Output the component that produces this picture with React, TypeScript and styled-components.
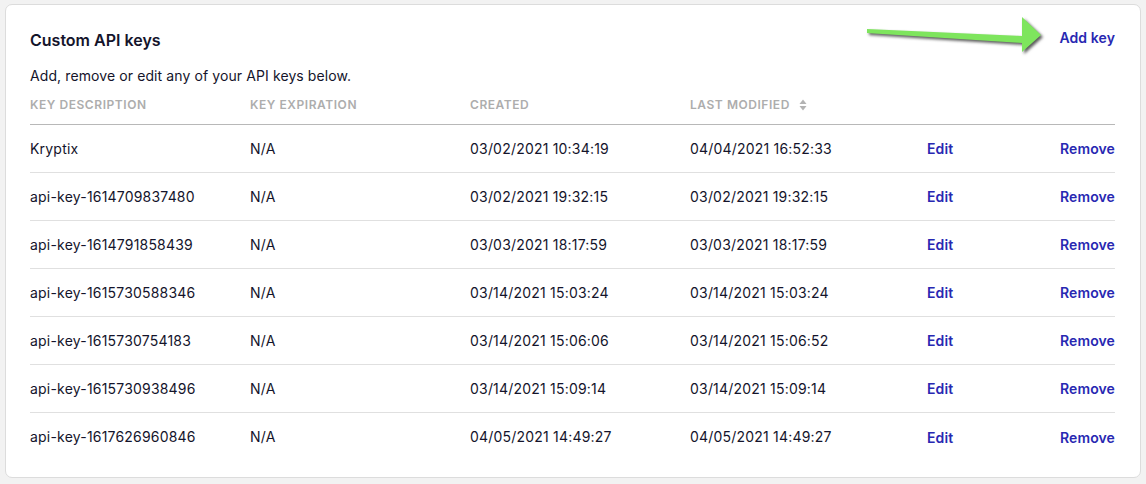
import React from "react";
import styled, { createGlobalStyle } from "styled-components";

const Global = createGlobalStyle`
  html, body { margin: 0; padding: 0; background: #f2f2f2; }
  body { font-family: Inter, "Noto Sans", Arial, sans-serif; color: #1c1c33; }
  * { box-sizing: border-box; }
`;

const Page = styled.div`
  padding: 4px 5px 7px 5px;
`;

const Card = styled.div`
  position: relative;
  background: #fff;
  border: 1px solid #dcdcdc;
  border-radius: 7px;
  padding: 23px 25px 16px 24px;
`;

const Head = styled.div`
  display: flex;
  justify-content: space-between;
  align-items: flex-start;
`;

const Title = styled.h2`
  margin: 0;
  font-size: 16px;
  line-height: 24px;
  font-weight: 600;
  color: #14142b;
`;

const Link = styled.a`
  font-size: 14px;
  font-weight: 600;
  line-height: 20px;
  letter-spacing: 0.1px;
  color: #2828b2;
  text-decoration: none;
  cursor: pointer;
`;

const AddLink = styled(Link)`
  margin-top: 0;
`;

const Sub = styled.p`
  margin: 14px 0 0;
  font-size: 14px;
  line-height: 20px;
  letter-spacing: 0.1px;
  color: #14142b;
`;

const Row = styled.div<{ $header?: boolean; $last?: boolean }>`
  display: grid;
  grid-template-columns: 220px 220px 220px 220px 110px 1fr;
  align-items: center;
  height: ${(p) => (p.$header ? "auto" : "48px")};
  padding: ${(p) => (p.$header ? "11px 0 11px" : "0")};
  border-bottom: ${(p) =>
    p.$last ? "none" : p.$header ? "1px solid #b8b8b8" : "1px solid #e0e0e0"};
`;

const Th = styled.div`
  font-size: 12px;
  line-height: 16px;
  font-weight: 600;
  letter-spacing: 0.55px;
  color: #adadad;
  text-transform: uppercase;
  display: flex;
  align-items: center;
  gap: 9px;
`;

const Td = styled.div`
  font-size: 14px;
  line-height: 20px;
  letter-spacing: 0.2px;
  color: #14142b;
`;

const EditCell = styled.div`
  padding-left: 17px;
`;

const RemoveCell = styled.div`
  text-align: right;
`;

const ArrowSvg = styled.svg`
  position: absolute;
  left: 854px;
  top: 7px;
  overflow: visible;
  filter: drop-shadow(2px 2px 1.5px rgba(0, 0, 0, 0.65));
`;

const SortIcon = () => (
  <svg width="8" height="12" viewBox="0 0 8 12">
    <path d="M4 0.5 L7.5 5 H0.5 Z" fill="#b3b3b3" />
    <path d="M4 11.5 L7.5 7 H0.5 Z" fill="#b3b3b3" />
  </svg>
);

const rows = [
  ["Kryptix", "N/A", "03/02/2021 10:34:19", "04/04/2021 16:52:33"],
  ["api-key-1614709837480", "N/A", "03/02/2021 19:32:15", "03/02/2021 19:32:15"],
  ["api-key-1614791858439", "N/A", "03/03/2021 18:17:59", "03/03/2021 18:17:59"],
  ["api-key-1615730588346", "N/A", "03/14/2021 15:03:24", "03/14/2021 15:03:24"],
  ["api-key-1615730754183", "N/A", "03/14/2021 15:06:06", "03/14/2021 15:06:52"],
  ["api-key-1615730938496", "N/A", "03/14/2021 15:09:14", "03/14/2021 15:09:14"],
  ["api-key-1617626960846", "N/A", "04/05/2021 14:49:27", "04/05/2021 14:49:27"],
];

export default function App() {
  return (
    <Page>
      <Global />
      <Card>
        <Head>
          <Title>Custom API keys</Title>
          <AddLink>Add key</AddLink>
        </Head>
        <Sub>Add, remove or edit any of your API keys below.</Sub>
        <Row $header>
          <Th>Key Description</Th>
          <Th>Key Expiration</Th>
          <Th>Created</Th>
          <Th>
            Last Modified <SortIcon />
          </Th>
          <Th />
          <Th />
        </Row>
        {rows.map((r, i) => (
          <Row key={r[0]} $last={i === rows.length - 1}>
            <Td>{r[0]}</Td>
            <Td>{r[1]}</Td>
            <Td>{r[2]}</Td>
            <Td>{r[3]}</Td>
            <EditCell>
              <Link>Edit</Link>
            </EditCell>
            <RemoveCell>
              <Link>Remove</Link>
            </RemoveCell>
          </Row>
        ))}
        <ArrowSvg width="190" height="50" viewBox="0 0 190 50">
          <polygon
            points="7,17 162,24 162,5 181,23 162,40 162,31 7,21"
            fill="#7ee55d"
          />
        </ArrowSvg>
      </Card>
    </Page>
  );
}
